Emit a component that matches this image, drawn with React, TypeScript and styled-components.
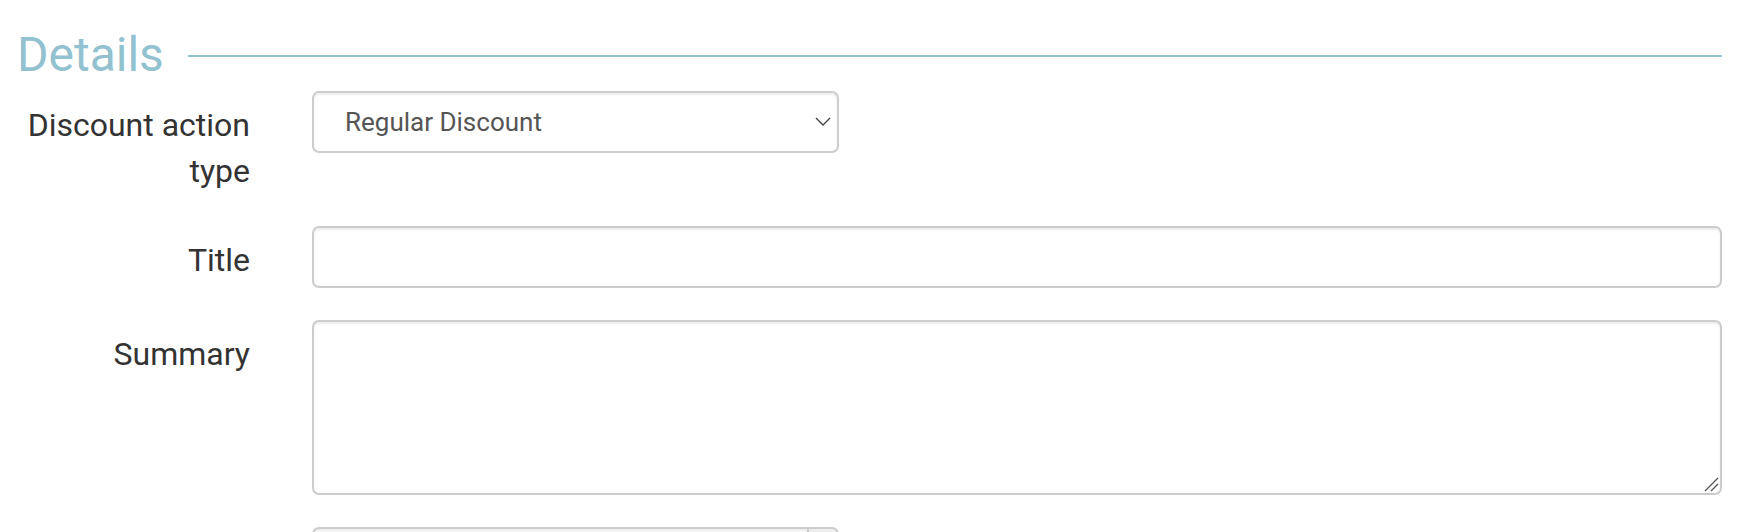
import React from "react";
import styled, { createGlobalStyle } from "styled-components";

const GlobalStyle = createGlobalStyle`
  html, body {
    margin: 0;
    padding: 0;
    background: #ffffff;
  }
  body {
    font-family: Roboto, "Liberation Sans", Arial, sans-serif;
  }
  * { box-sizing: border-box; }
`;

const Page = styled.div`
  padding: 27px 30px 0 17px;
`;

const SectionHeader = styled.div`
  display: flex;
  align-items: center;
  gap: 24px;
`;

const SectionTitle = styled.h2`
  margin: 0;
  font-size: 48px;
  font-weight: 400;
  line-height: 56px;
  color: #92c1d0;
`;

const SectionRule = styled.div`
  flex: 1;
  height: 2px;
  margin-top: 2px;
  background: #92c1d0;
`;

const Form = styled.form`
  margin-top: 8px;
`;

const FormRow = styled.div`
  display: grid;
  grid-template-columns: 233px 1fr;
  column-gap: 62px;
  margin-bottom: 32px;
  align-items: start;
`;

const Label = styled.label`
  text-align: right;
  font-size: 32px;
  line-height: 46px;
  padding-top: 11px;
  color: #333333;
`;

const fieldBase = `
  font-family: Roboto, "Liberation Sans", Arial, sans-serif;
  border: 2px solid #cccccc;
  border-radius: 7px;
  background: #ffffff;
  box-shadow: inset 0 2px 2px rgba(0, 0, 0, 0.075);
  color: #555555;
  font-size: 26px;
  outline: none;
`;

const SelectWrap = styled.div`
  position: relative;
  width: 527px;
  height: 62px;
`;

const Select = styled.select`
  ${fieldBase}
  appearance: none;
  -webkit-appearance: none;
  width: 100%;
  height: 100%;
  padding: 0 40px 0 31px;
`;

const Chevron = styled.svg`
  position: absolute;
  right: 8px;
  top: 26px;
  width: 16px;
  height: 9px;
  pointer-events: none;
`;

const TextInput = styled.input`
  ${fieldBase}
  display: block;
  width: 100%;
  height: 62px;
  padding: 0 31px;
`;

const TextAreaWrap = styled.div`
  position: relative;
`;

const TextArea = styled.textarea`
  ${fieldBase}
  display: block;
  width: 100%;
  height: 175px;
  padding: 12px 31px;
  resize: none;
`;

const ResizeGrip = styled.svg`
  position: absolute;
  right: 3px;
  bottom: 3px;
  width: 15px;
  height: 15px;
  pointer-events: none;
`;

const InputGroup = styled.div`
  display: flex;
  width: 527px;
  height: 62px;
`;

const GroupInput = styled.input`
  ${fieldBase}
  flex: 1;
  min-width: 0;
  height: 100%;
  border-radius: 7px 0 0 7px;
  padding: 0 31px;
`;

const GroupAddon = styled.span`
  width: 30px;
  height: 100%;
  border: 2px solid #cccccc;
  border-left: none;
  border-radius: 0 7px 7px 0;
  background: #eeeeee;
`;

export default function App() {
  return (
    <>
      <GlobalStyle />
      <Page>
        <SectionHeader>
          <SectionTitle>Details</SectionTitle>
          <SectionRule />
        </SectionHeader>
        <Form onSubmit={(e) => e.preventDefault()}>
          <FormRow>
            <Label htmlFor="type">Discount action type</Label>
            <SelectWrap>
              <Select id="type" defaultValue="regular">
                <option value="regular">Regular Discount</option>
                <option value="bogo">Buy X Get Y</option>
              </Select>
              <Chevron viewBox="0 0 16 9">
                <path d="M1 1 L8 8 L15 1" fill="none" stroke="#444" strokeWidth="1.4" />
              </Chevron>
            </SelectWrap>
          </FormRow>
          <FormRow>
            <Label htmlFor="title">Title</Label>
            <TextInput id="title" type="text" />
          </FormRow>
          <FormRow>
            <Label htmlFor="summary">Summary</Label>
            <TextAreaWrap>
              <TextArea id="summary" />
              <ResizeGrip viewBox="0 0 15 15">
                <path d="M1 14 L14 1 M7 14 L14 7" fill="none" stroke="#555" strokeWidth="1.3" />
              </ResizeGrip>
            </TextAreaWrap>
          </FormRow>
          <FormRow>
            <Label htmlFor="extra"></Label>
            <InputGroup>
              <GroupInput id="extra" type="text" />
              <GroupAddon />
            </InputGroup>
          </FormRow>
        </Form>
      </Page>
    </>
  );
}
